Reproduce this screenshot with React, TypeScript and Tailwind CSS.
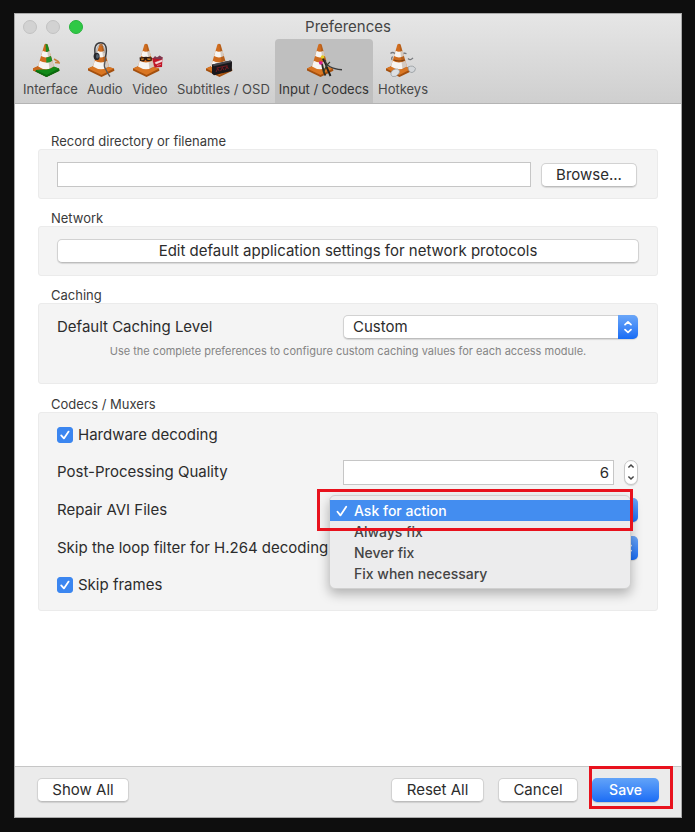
import { useState } from "react";
import type { ReactNode } from "react";

const FONT = "font-['Inter','Liberation_Sans',sans-serif]";

function Cone({ green = false, children }: { green?: boolean; children?: ReactNode }) {
  return (
    <svg viewBox="0 0 36 36" className="h-9 w-9" aria-hidden="true">
      <path d="M1 26.5 L11 22 L27 26.5 L27.4 28.8 L14.5 35 L1 28.4 Z" fill="#a4500f" />
      <path d="M1 26.5 L11 22 L27 26.5 L14.5 33 Z" fill="#d97623" />
      <path d="M12.4 2.4 Q14 1.2 15.6 2.4 L22 24.6 Q14 30 6 24.6 Z" fill="#cf6c1f" />
      <path d="M10.6 8.8 Q14 10.6 17.4 8.8 L18.9 14 Q14 16.8 9.1 14 Z" fill="#f7f5f2" />
      <path d="M7.7 18.8 Q14 22.2 20.3 18.8 L22 24.6 Q14 30 6 24.6 Z" fill="#f7f5f2" />
      <path d="M15.4 2.4 L22 24.6 Q20 26.8 17.5 27.4 L14.4 2 Z" fill="#5a3010" opacity="0.22" />
      {green && (
        <>
          <path d="M13.6 1.8 L15.6 2.4 L17.4 8.8 Q16 10 13.9 10 Z" fill="#1d8a22" />
          <path d="M14.2 15.6 Q17 15.4 18.9 14 L20.3 18.8 Q18 20.8 14.4 20.8 Z" fill="#1f9226" />
          <path d="M1 26.5 L7.2 23.6 L6 24.6 Q9 27.4 13 27.4 L8 30.6 L1 28.4 Z" fill="#c9661c" />
          <path d="M14.6 27.4 Q19 27 22 24.6 L27 26.5 L27.4 28.8 L14.5 35 L3.6 29.6 L4 28 L9 27.4 Z" fill="#138a18" />
          <path d="M4 28 L14.5 33 L27 26.5 L27.4 28.8 L14.5 35 L3.6 29.6 Z" fill="#0b6b10" />
          <path d="M22 17 l5 3 M23 20.5 l5 0.5" stroke="#c9803e" strokeWidth="1.5" />
        </>
      )}
      {children}
    </svg>
  );
}

const tabs: { name: string; icon: ReactNode }[] = [
  { name: "Interface", icon: <Cone green /> },
  {
    name: "Audio",
    icon: (
      <Cone>
        <path d="M8.5 14 C6.5 5 9 0.8 13.5 0.8 C19 0.8 20.5 6 18.5 15" fill="none" stroke="#3c3c3e" strokeWidth="1.5" />
        <path d="M10 13 C9 6 11 3 13.6 3 C17 3 17.8 7 17 11" fill="none" stroke="#8b8b8e" strokeWidth="0.7" />
        <ellipse cx="9.6" cy="14.4" rx="3" ry="3.7" fill="#26262a" />
        <ellipse cx="10.4" cy="14.2" rx="1.4" ry="2.2" fill="#55616e" />
        <path d="M18.5 15 C19.5 20 15 22 18.5 27 C20 30 21 32 23 34.5" fill="none" stroke="#58585a" strokeWidth="1.3" />
      </Cone>
    ),
  },
  {
    name: "Video",
    icon: (
      <Cone>
        <path d="M7.5 15.6 L14 14.8 L20 15.5 L19.5 18.8 L14.8 19.2 L13.5 17.5 L12 19.4 L8 19 Z" fill="#2c1a12" />
        <path d="M9 16.6 L12 16.2 L11.5 18 L9.4 18.2 Z M15 16.3 L18.8 16.4 L18.4 17.9 L15.6 18 Z" fill="#c67a20" />
        <path d="M20 16 L30.5 15 L30 25 L22.5 25.5 Z" fill="#c01526" />
        <path d="M21 16.5 l2 -2.5 2 1.6 2.6 -2 3 2 -0.5 2 Z" fill="#7c3950" />
        <path d="M23 20.5 L30 18 L30 19.5 L24 22 Z M25 23.5 l4 -1.2" fill="#f4dfe0" stroke="#f4dfe0" strokeWidth="0.5" />
      </Cone>
    ),
  },
  {
    name: "Subtitles / OSD",
    icon: (
      <Cone>
        <path d="M7 22.4 L25.5 18.5 L27 20 L26.8 29 L9 33.3 L7 31.6 Z" fill="#19171a" />
        <path d="M7 22.4 L25.5 18.5 L27 20 L9 24.2 Z" fill="#46444a" />
        <path d="M11 30 l1.8 -3.6 1.4 2.8 M15.6 29 l1.8 -3.6 1.4 2.8 M20.2 28 l1.8 -3.6 1.4 2.6 M11.5 26 l11 -2.4" fill="none" stroke="#8a1a22" strokeWidth="0.8" />
      </Cone>
    ),
  },
  {
    name: "Input / Codecs",
    icon: (
      <Cone>
        <path d="M16.5 15 C18 20 20 21 21 26 L24.5 34" fill="none" stroke="#22221e" strokeWidth="1.9" />
        <path d="M15 21 C18 23 15.5 28 19.5 33.5" fill="none" stroke="#2b2b24" strokeWidth="1.9" />
        <path d="M19 18 C20 25 27 27 36 27.8" fill="none" stroke="#3a3a3a" strokeWidth="1.5" />
        <path d="M24 20 C20 23 19 26 17.5 31" fill="none" stroke="#33422c" strokeWidth="1.2" />
        <circle cx="16.6" cy="15" r="1.8" fill="#e6cf23" />
        <circle cx="14.8" cy="20.8" r="1.9" fill="#d8208b" />
      </Cone>
    ),
  },
  {
    name: "Hotkeys",
    icon: (
      <Cone>
        <path d="M5.5 11.5 q2 -2 4.5 0 M23 16.5 q2.5 2.4 5 -0.6 M7 18 q-1 -2 0.6 -3.4 M18.5 11 l3 0.6" fill="none" stroke="#77797c" strokeWidth="1.3" />
        <path d="M9 18 q5 2 10.5 0" fill="none" stroke="#7b420f" strokeWidth="1.2" />
        <path d="M6 30.5 q2 -4 6.5 -3.5 q3.5 1.5 1.5 4.5 q-3 4 -6.5 3 q-2 -1.4 -1.5 -4 Z" fill="#dcdfe2" stroke="#8d9297" strokeWidth="0.7" />
        <path d="M23 25 q5 -2.4 7.5 1.4 q0 3.4 -3.5 4.2 q-4 -0.6 -4 -5.6 Z" fill="#d3d6d9" stroke="#8d9297" strokeWidth="0.7" />
      </Cone>
    ),
  },
];

const BUTTON =
  "flex h-6 items-center justify-center rounded-[5px] border border-[#d2d2d2] border-b-[#bdbdbd] bg-white text-[15px] leading-5 text-[#2c2c2c] shadow-[0_1px_1px_rgba(0,0,0,0.12)]";

function Section({ title, body, children }: { title: string; body: string; children: ReactNode }) {
  return (
    <section>
      <h2 className="pl-[13px] text-[13px] leading-4 text-[#3a3a3a]">{title}</h2>
      <div className={`rounded-[3px] border border-[#ebebeb] bg-[#f4f4f4] px-[18px] ${body}`}>{children}</div>
    </section>
  );
}

function Popup({ id, options }: { id: string; options: string[] }) {
  return (
    <div className="relative h-6 w-[295px] shrink-0">
      <select
        id={id}
        className="h-6 w-full appearance-none rounded-[5px] border border-[#d2d2d2] border-b-[#bdbdbd] bg-white pl-[9px] text-[15px] leading-5 text-[#2c2c2c] shadow-[0_1px_1px_rgba(0,0,0,0.12)]"
      >
        {options.map((o) => (
          <option key={o}>{o}</option>
        ))}
      </select>
      <span className="pointer-events-none absolute inset-y-0 right-0 flex w-5 items-center justify-center rounded-r-[5px] bg-linear-to-b from-[#6aa6f8] to-[#166cf5]">
        <svg viewBox="0 0 10 14" className="h-3.5 w-2.5" fill="none" stroke="white" strokeWidth="1.7" strokeLinecap="round" strokeLinejoin="round" aria-hidden="true">
          <path d="M2 4.6 L5 1.8 L8 4.6 M2 9.6 L5 12.4 L8 9.6" />
        </svg>
      </span>
    </div>
  );
}

function Check({ label }: { label: string }) {
  const [on, setOn] = useState(true);
  return (
    <label className="flex h-[22px] items-center gap-[5px]">
      <span className="relative h-4 w-4">
        <input
          type="checkbox"
          checked={on}
          onChange={() => setOn(!on)}
          className="block h-4 w-4 appearance-none rounded-[3px] border border-[#c4c4c4] bg-white checked:border-[#3b86f0] checked:bg-[#3b86f0]"
        />
        {on && (
          <svg viewBox="0 0 16 16" className="pointer-events-none absolute inset-0" fill="none" stroke="white" strokeWidth="1.8" strokeLinecap="round" strokeLinejoin="round" aria-hidden="true">
            <path d="M4.2 8.4 L6.9 11.4 L11.6 4.6" />
          </svg>
        )}
      </span>
      {label}
    </label>
  );
}

const repairOptions = ["Ask for action", "Always fix", "Never fix", "Fix when necessary"];

export default function App() {
  const [tab, setTab] = useState("Input / Codecs");
  const [quality, setQuality] = useState(6);
  const [repair, setRepair] = useState(repairOptions[0]);

  return (
    <div className={`flex min-h-screen flex-col bg-[#0e0e0e] pt-[13px] pr-[13px] pb-3.5 pl-3.5 ${FONT}`}>
      <main className="flex grow flex-col border border-[#a9a9a9] bg-white">
        <header className="border-b border-[#b4b4b4] bg-linear-to-b from-[#e6e6e6] to-[#cfcfcf]">
          <div className="grid h-[25px] grid-cols-[1fr_auto_1fr] items-center">
            <div className="flex gap-[9px] pl-2">
              <button aria-label="Close" className="h-3.5 w-3.5 rounded-full border border-[#c2c2c2] bg-[#d2d2d2]" />
              <button aria-label="Minimize" className="h-3.5 w-3.5 rounded-full border border-[#c2c2c2] bg-[#d2d2d2]" />
              <button aria-label="Zoom" className="h-3.5 w-3.5 rounded-full border border-[#27b33c] bg-[#2fc845]" />
            </div>
            <h1 className="text-[15px] leading-5 text-[#454545]">Preferences</h1>
          </div>
          <nav className="flex gap-px pl-1">
            {tabs.map((t) => (
              <button
                key={t.name}
                onClick={() => setTab(t.name)}
                aria-pressed={tab === t.name}
                className={`flex flex-col items-center gap-[3px] rounded-t-[4px] px-1 pt-[3px] pb-1.5 text-[13px] leading-4 whitespace-nowrap ${
                  tab === t.name ? "bg-[#bfbfbf] text-[#333333]" : "text-[#484848]"
                }`}
              >
                {t.icon}
                {t.name}
              </button>
            ))}
          </nav>
        </header>

        <div className="flex grow flex-col gap-[11px] px-[23px] pt-[29px] pb-6">
          <Section title="Record directory or filename" body="pt-3 pb-[11px]">
            <div className="flex items-center gap-2.5 pr-0.5">
              <input
                type="text"
                aria-label="Record directory or filename"
                className="h-[25px] min-w-0 grow border border-[#c6c6c6] bg-white px-2 text-[15px]"
              />
              <button className={`${BUTTON} w-24`}>Browse...</button>
            </div>
          </Section>

          <Section title="Network" body="py-3">
            <button className={`${BUTTON} w-full`}>Edit default application settings for network protocols</button>
          </Section>

          <Section title="Caching" body="pt-[11px] pb-6">
            <div className="flex items-center justify-between pr-px text-[15px] leading-5 text-[#2c2c2c]">
              <label htmlFor="caching">Default Caching Level</label>
              <Popup id="caching" options={["Custom", "Lowest latency", "Low latency", "Normal"]} />
            </div>
            <p className="pt-1 text-center text-[11px] leading-4 text-[#858585]">
              Use the complete preferences to configure custom caching values for each access module.
            </p>
          </Section>

          <div className="pt-px">
            <Section title="Codecs / Muxers" body="pt-[11px] pb-3.5">
              <div className="flex flex-col gap-3.5 pr-px text-[15px] leading-5 text-[#2c2c2c]">
                <Check label="Hardware decoding" />
                <div className="flex h-6 items-center justify-between">
                  <label htmlFor="quality">Post-Processing Quality</label>
                  <div className="flex w-[295px] items-center justify-between">
                    <input
                      id="quality"
                      type="text"
                      inputMode="numeric"
                      value={quality}
                      onChange={(e) => setQuality(Number(e.target.value) || 0)}
                      className="h-[25px] w-[271px] border border-[#c6c6c6] bg-white pr-1 text-right text-[15px]"
                    />
                    <div className="flex h-[25px] w-3.5 flex-col overflow-hidden rounded-full border border-[#c8c8c8] bg-white shadow-[0_1px_1px_rgba(0,0,0,0.12)]">
                      <button aria-label="Increase" onClick={() => setQuality(quality + 1)} className="flex grow items-center justify-center">
                        <svg viewBox="0 0 8 6" className="h-1.5 w-2" fill="none" stroke="#444444" strokeWidth="1.5" aria-hidden="true">
                          <path d="M1.4 4.5 L4 2 L6.6 4.5" />
                        </svg>
                      </button>
                      <button aria-label="Decrease" onClick={() => setQuality(quality - 1)} className="flex grow items-center justify-center">
                        <svg viewBox="0 0 8 6" className="h-1.5 w-2" fill="none" stroke="#444444" strokeWidth="1.5" aria-hidden="true">
                          <path d="M1.4 1.5 L4 4 L6.6 1.5" />
                        </svg>
                      </button>
                    </div>
                  </div>
                </div>
                <div className="flex h-6 items-center justify-between">
                  <label htmlFor="repair">Repair AVI Files</label>
                  <div className="relative">
                    <Popup id="repair" options={[""]} />
                    <ul
                      role="listbox"
                      aria-label="Repair AVI Files"
                      className="absolute -top-[3px] -left-3.5 z-10 w-[302px] rounded-[6px] border border-[#d0d0d0] bg-[#ececed] py-1 text-sm font-medium shadow-[0_5px_12px_rgba(0,0,0,0.28)]"
                    >
                      {repairOptions.map((o) => (
                        <li
                          key={o}
                          role="option"
                          aria-selected={repair === o}
                          onClick={() => setRepair(o)}
                          className={`flex h-[21px] items-center ${repair === o ? "bg-[#438df0] text-white" : "text-[#444444]"}`}
                        >
                          <span className="flex w-6 justify-center">
                            {repair === o && (
                              <svg viewBox="0 0 12 12" className="h-3 w-3" fill="none" stroke="white" strokeWidth="1.8" strokeLinecap="round" strokeLinejoin="round" aria-hidden="true">
                                <path d="M1.5 6.8 L4.4 10.4 L10.2 1.8" />
                              </svg>
                            )}
                          </span>
                          {o}
                        </li>
                      ))}
                    </ul>
                    <div className="pointer-events-none absolute -top-[9px] -left-[26px] z-20 h-[42px] w-[316px] border-3 border-[#e8121d]" />
                  </div>
                </div>
                <div className="flex h-6 items-center justify-between">
                  <label htmlFor="loop" className="whitespace-nowrap">
                    Skip the loop filter for H.264 decoding
                  </label>
                  <Popup id="loop" options={[""]} />
                </div>
                <Check label="Skip frames" />
              </div>
            </Section>
          </div>
        </div>

        <footer className="flex items-start gap-3.5 border-t border-[#c6c6c6] bg-[#ebebeb] px-[22px] pt-[11px] pb-[15px]">
          <button className={`${BUTTON} mr-auto w-[92px]`}>Show All</button>
          <button className={`${BUTTON} w-[93px]`}>Reset All</button>
          <button className={`${BUTTON} w-20`}>Cancel</button>
          <div className="relative">
            <button className="flex h-6 w-[67px] items-center justify-center rounded-[5px] bg-linear-to-b from-[#62a3f8] to-[#1a6cf5] text-sm font-medium text-white shadow-[0_1px_1px_rgba(0,0,0,0.15)]">
              Save
            </button>
            <div className="pointer-events-none absolute -top-3 -left-[3px] h-[43px] w-[84px] border-3 border-[#e8121d]" />
          </div>
        </footer>
      </main>
    </div>
  );
}
